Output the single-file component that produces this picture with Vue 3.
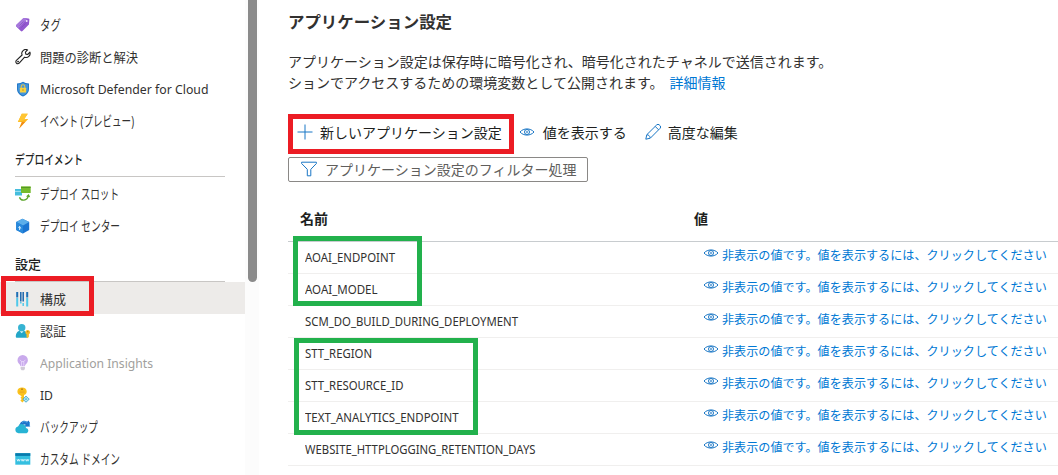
<script setup>
const vFit = {
  mounted(el, { value }) {
    const natural = el.getBoundingClientRect().width
    if (natural > 0) el.style.transform = `scaleX(${value / natural})`
  }
}

const groups = [
  {
    title: '', width: 0,
    items: [
      { icon: 'tag', label: 'タグ', w: 21, kana: true },
      { icon: 'wrench', label: '問題の診断と解決', w: 98 },
      { icon: 'shield', label: 'Microsoft Defender for Cloud', w: 168.5 },
      { icon: 'bolt', label: 'イベント (プレビュー)', w: 94, kana: true }
    ]
  },
  {
    title: 'デプロイメント', width: 68,
    items: [
      { icon: 'slots', label: 'デプロイ スロット', w: 79, kana: true },
      { icon: 'center', label: 'デプロイ センター', w: 80, kana: true }
    ]
  },
  {
    title: '設定', width: 26,
    items: [
      { icon: 'config', label: '構成', w: 26, active: true },
      { icon: 'auth', label: '認証', w: 26 },
      { icon: 'bulb', label: 'Application Insights', w: 113, disabled: true },
      { icon: 'key', label: 'ID', w: 13 },
      { icon: 'backup', label: 'バックアップ', w: 58, kana: true },
      { icon: 'domain', label: 'カスタム ドメイン', w: 80, kana: true }
    ]
  }
]

const settings = [
  { name: 'AOAI_ENDPOINT', w: 90 },
  { name: 'AOAI_MODEL', w: 72.5 },
  { name: 'SCM_DO_BUILD_DURING_DEPLOYMENT', w: 213 },
  { name: 'STT_REGION', w: 67 },
  { name: 'STT_RESOURCE_ID', w: 98.5 },
  { name: 'TEXT_ANALYTICS_ENDPOINT', w: 153.5 },
  { name: 'WEBSITE_HTTPLOGGING_RETENTION_DAYS', w: 230.5 }
]
</script>

<template>
  <div class="page">
    <nav class="sidebar">
      <section v-for="(g, i) in groups" :key="i" class="group">
        <h3 v-if="g.title"><span v-fit="g.width" class="fit">{{ g.title }}</span></h3>
        <div v-for="it in g.items" :key="it.label" class="item" :class="{ active: it.active, disabled: it.disabled, kana: it.kana }">
          <svg class="icon" viewBox="0 0 16 16">
            <g v-if="it.icon === 'tag'">
              <path d="M1.2 8 8 1.4q.6-.5 1.4-.4l4 .5q1 .2 1 1.100l-.4 4.300q0 .7-.6 1.200L7.500 14q-.9.8-1.700 0L1.300 9.500q-.7-.8-.1-1.500z" fill="#9258cf" />
              <path d="M1.2 8 8 1.400q.6-.5 1.400-.4l3 .4L3.500 11.500 1.300 9.500q-.7-.8-.1-1.500z" fill="#a678dc" />
              <path d="m4.500 8.500 4-4M6.500 10.500l4-4" stroke="#7f47bb" stroke-width=".6" />
              <circle cx="11.700" cy="3.900" r="1" fill="#efe4fa" />
            </g>
            <g v-else-if="it.icon === 'wrench'" fill="#fff" stroke="#222" stroke-width="1.100" stroke-linejoin="round">
              <path d="M14.900 3.200a4 4 0 0 1-5.300 5L4.200 14.200a1.900 1.900 0 0 1-2.800-.1 1.900 1.900 0 0 1 0-2.700L7.100 6A4 4 0 0 1 12.600.9L10.400 3.200l.4 1.900 1.900.4z" />
              <circle cx="3.100" cy="12.600" r=".4" />
            </g>
            <g v-else-if="it.icon === 'shield'">
              <path d="M8 .8q2.400 1.700 6 1.700v5.200c0 4-2.500 6.200-6 7.800-3.500-1.600-6-3.800-6-7.800V2.500q3.600 0 6-1.700z" fill="#2178c8" />
              <path d="M8 1.800q2.200 1.500 5.100 1.600v4.300c0 3.500-2.100 5.200-5.100 6.700-3-1.500-5.100-3.200-5.100-6.700V3.400Q5.800 3.300 8 1.800z" fill="#4496dc" />
              <path d="M6.200 7V5.500a1.800 1.800 0 0 1 3.600 0V7" fill="none" stroke="#e3c348" stroke-width="1.100" />
              <rect x="4.900" y="6.700" width="6.200" height="4.700" rx=".5" fill="#f7d241" />
              <path d="M8 8.300v1.500" stroke="#b88b16" stroke-width="1" />
            </g>
            <g v-else-if="it.icon === 'bolt'">
              <path d="M6.800.8h6L9.300 6h3.900L4.200 15.500 6.700 9H2.800z" fill="#fcb51d" />
              <path d="M6.800.8h6L9.300 6H13L3 9z" fill="#ffc532" />
              <path d="m7 9-2.800 6.500L10 9z" fill="#f18a18" />
            </g>
            <g v-else-if="it.icon === 'slots'">
              <path d="M0 3h7v6.500H0z" fill="#45bddd" /><path d="M0 5.400h7" stroke="#a5e2f2" />
              <path d="M6 .3h9.700v6.700H6z" fill="#76bb2e" /><path d="M6 1.500h9.700" stroke="#4d9221" stroke-width=".8" />
              <path d="M4.500 11.200c1.300 4.200 7.700 4 9-1.500" fill="none" stroke="#5ba52a" stroke-width="1.300" />
              <path d="m11 10.600 2.700-2.600 1.500 3.300z" fill="#5ba52a" />
            </g>
            <g v-else-if="it.icon === 'center'">
              <path d="m7.500.7 6.700 3.300v8L8 15.500 1.200 12V4z" fill="#1b75d1" />
              <path d="m1.200 4 6.300-3.300L14.200 4 8 7.500z" fill="#5baeea" />
              <path d="M1.200 4 8 7.500v8L1.200 12z" fill="#2889dc" />
              <path d="M4.600 12V8.800M3.400 9.600l1.200-1.300L5.800 10.600" stroke="#d8efff" fill="none" />
            </g>
            <g v-else-if="it.icon === 'config'">
              <path d="M2.200 1v5.500M12.200 1v5.500" stroke="#1f6fb5" stroke-width="2" />
              <path d="M2.200 7v8.500M12.200 7v8.500" stroke="#50c9ea" stroke-width="2" />
              <path d="M5.800 1v9.500M8.200 1v9.500" stroke="#1b65ac" stroke-width="1.500" />
              <path d="M5.800 11v1.500M8.200 12v3" stroke="#50c9ea" stroke-width="1.500" />
            </g>
            <g v-else-if="it.icon === 'auth'">
              <path d="M.8 13.800C.8 9.500 3 7.500 6.700 7.500s5.900 2 5.900 6.300q0 .9-.9.900h-10q-.9 0-.9-.9z" fill="#23a6c7" />
              <circle cx="6.700" cy="4.700" r="3.700" fill="#36b3d2" />
              <path d="m4.700 8.200 2 2 2-2" fill="#d5f4fa" />
              <path d="M12.800 7a2.300 2.300 0 0 1 1.100 4.300v2.500l-1.200 1.500-1.200-1.200v-2.800A2.300 2.300 0 0 1 12.800 7z" fill="#f9bd28" />
              <circle cx="12.800" cy="8.700" r=".6" fill="#a96a12" />
            </g>
            <g v-else-if="it.icon === 'bulb'">
              <path d="M5.500 11.300c0-2-3-3.200-3-6.100a5.200 5.200 0 0 1 10.400 0c0 2.900-3 4.100-3 6.100z" fill="#c9aaec" />
              <path d="M6.600 11.200V6.600L5 4.800M8.800 11.200V6.600l1.600-1.800M6.500 6.600h2.400" fill="none" stroke="#f1e5ff" stroke-width=".7" />
              <path d="M5.600 12h4.300v2l-1 1.300H6.600l-1-1.300z" fill="#cfcad6" />
            </g>
            <g v-else-if="it.icon === 'key'">
              <path d="M7 .5c2.800 0 4.700 1.500 4.700 3.900 0 1.700-1 3-2.700 3.700v5.700l-1.600 1.600-2-2 1.300-1.300-1.300-1.300 1.300-1.200L5 8C3.300 7.300 2.400 6 2.400 4.400 2.400 2 4.200.5 7 .5z" fill="#fbc21c" />
              <path d="M4.500 4.200h5M4.500 5.500h5" stroke="#e9a620" stroke-width=".7" /><circle cx="7" cy="2.200" r=".9" fill="#b57c1c" />
              <path d="m11 9 3.300 3.200L11 15.300l-3.200-3.100z" fill="#68c6e3" stroke="#3098bd" stroke-width=".6" />
              <path d="m11 10.200 2 2-2 1.800-1.800-1.800z" fill="none" stroke="#e0f7fc" stroke-width=".7" />
            </g>
            <g v-else-if="it.icon === 'backup'">
              <path d="M4.100 7.600C4.700 2.800 8.600.3 12 2.700l1.900-1.300 1.300 6.200-6 .2 1.500-2C8.600 5 7.200 5.600 6.700 7.700z" fill="#1c72c9" />
              <path d="M7 3.500c2-1.500 3.800-1.100 5.400.3M14.500 3v4" stroke="#4aa4e6" fill="none" />
              <path d="M3.500 14.200A3.400 3.400 0 0 1 3 7.500a4.200 4.200 0 0 1 8 1.500 2.700 2.700 0 0 1 .6 5.200z" fill="#27b3d4" />
            </g>
            <g v-else>
              <path d="M.3 2.200h15v11.500H.3z" fill="#35bfe0" /><path d="M.3 2.200h15v2.700H.3z" fill="#087aac" />
              <path d="m2 8.200.8 2 .8-2 .8 2 .8-2m1.100 0 .8 2 .8-2 .8 2 .8-2m1.100 0 .8 2 .8-2 .8 2 .8-2" fill="none" stroke="#e7faff" stroke-width=".8" />
            </g>
          </svg>
          <span v-fit="it.w" class="fit">{{ it.label }}</span>
        </div>
      </section>
      <div class="callout red nav-mark"></div>
    </nav>

    <div class="gutter"><div class="thumb"></div></div>

    <main>
      <h2><span v-fit="164" class="fit">アプリケーション設定</span></h2>
      <p class="intro">アプリケーション設定は保存時に暗号化され、暗号化されたチャネルで送信されます。<br>ションでアクセスするための環境変数として公開されます。<a>詳細情報</a></p>

      <div class="toolbar">
        <button class="add">
          <svg viewBox="0 0 16 16"><path d="M8 .5v15M.5 8h15" /></svg>
          <span>新しいアプリケーション設定</span>
        </button>
        <button class="show">
          <svg viewBox="0 0 16 16"><path d="M1 8C4.500 3.900 11.500 3.900 15 8 11.500 12.100 4.500 12.100 1 8z" /><circle cx="8" cy="8" r="2.500" /><circle cx="8" cy="8" r=".5" /></svg>
          <span>値を表示する</span>
        </button>
        <button class="edit">
          <svg viewBox="0 0 16 16"><path d="m.8 15.200 1-4.500L11.600 1a1.900 1.900 0 0 1 2.800 0l.6.6a1.900 1.900 0 0 1 0 2.800l-9.700 9.800zM10.200 2.400l3.400 3.400M1.900 10.700c1.800.2 3 1.300 3.300 3.200" /></svg>
          <span>高度な編集</span>
        </button>
      </div>

      <div class="filter">
        <svg viewBox="0 0 16 16"><path d="M.6 1.200h14.800v1.300L9.800 8.300v6.500H6.300V8.300L.6 2.500z" /></svg>
        <span>アプリケーション設定のフィルター処理</span>
      </div>

      <div class="table">
        <div class="head"><span>名前</span><span>値</span></div>
        <div v-for="s in settings" :key="s.name" class="row">
          <span class="name"><span v-fit="s.w" class="fit">{{ s.name }}</span></span>
          <a class="value">
            <svg viewBox="0 0 16 16"><path d="M1 8C4.500 3.900 11.500 3.900 15 8 11.500 12.100 4.500 12.100 1 8z" /><circle cx="8" cy="8" r="2.500" /><circle cx="8" cy="8" r=".5" /></svg>
            <span v-fit="324.8" class="fit">非表示の値です。値を表示するには、クリックしてください</span>
          </a>
        </div>
      </div>
      <div class="callout red add-mark"></div>
      <div class="callout green aoai-mark"></div>
      <div class="callout green stt-mark"></div>
    </main>
  </div>
</template>

<style>
body { margin: 0; background: #fff; overflow: hidden; }
</style>

<style scoped>
.page { position: relative; display: flex; width: 1058px; height: 475px; overflow: hidden; background: #fff; color: #323130; font: 14px/20px "Noto Sans CJK JP", sans-serif; }
.fit { display: inline-block; white-space: pre; transform-origin: left center; }
.sidebar { flex: none; width: 245px; padding-top: 8px; box-sizing: border-box; font: 13px/20px "Noto Sans", "Noto Sans CJK JP", sans-serif; }
.item { display: flex; align-items: center; height: 32px; box-sizing: border-box; padding: 1px 0 0 15px; gap: 9px; white-space: nowrap; }
.group:nth-child(2) .item { padding: 0 0 1px 15px; }
.kana { font-size: 14px; }
.icon { flex: none; width: 16px; height: 16px; }
.active { background: #edebe9; }
.disabled { color: #a19f9d; }
h3 { box-sizing: border-box; height: 41px; margin: 0 20px 1px 15px; padding-top: 13px; border-bottom: 1px solid #c8c6c4; color: #201f1e; font-size: 13px; line-height: 20px; font-weight: 500; white-space: nowrap; }
.group:nth-child(3) h3 { height: 40px; margin-bottom: 0; padding-top: 12px; }
.gutter { flex: none; width: 14px; background: #fcfcfc; }
.thumb { width: 9px; height: 282px; margin-left: 3px; background: #8b8b8b; border-radius: 0 0 5px 5px; }
main { flex: 1; min-width: 0; padding-left: 29px; }
h2 { height: 24px; margin: 9px 0 18px; font-size: 16px; line-height: 24px; font-weight: 700; }
.intro { margin: 0; height: 42px; line-height: 21px; white-space: nowrap; }
.intro a { margin-left: 6px; color: #0078d4; }
.toolbar { display: flex; align-items: center; height: 40px; margin-top: 20px; }
button { display: flex; align-items: center; height: 22px; box-sizing: border-box; padding: 0 0 2px; border: 0; background: none; color: #201f1e; font: inherit; white-space: nowrap; }
button svg, .filter svg, .value svg { flex: none; width: 16px; height: 16px; fill: none; stroke: #1976c5; stroke-width: 1; }
.add { padding-left: 9px; gap: 7px; }
.show { margin-left: 17px; gap: 8px; }
.edit { margin-left: 18px; gap: 7px; }
.filter { display: flex; align-items: center; width: 300px; height: 25px; box-sizing: border-box; margin-top: 4px; padding: 0 0 1px 12px; gap: 8px; border: 1px solid #8a8886; border-radius: 2px; color: #605e5c; white-space: nowrap; }
.table { margin-top: 19px; }
.head { display: grid; grid-template-columns: 394px 1fr; box-sizing: border-box; height: 41px; padding: 7px 0 0 12px; border-bottom: 1px solid #c8cccf; color: #201f1e; font-weight: 700; }
.row { display: grid; grid-template-columns: 398px 1fr; box-sizing: border-box; height: 32px; padding-left: 17px; border-bottom: 1px solid #f0efee; white-space: nowrap; }
.name { font: 12px/31px "Noto Sans", sans-serif; }
.value { display: flex; align-items: flex-start; padding-top: 3px; gap: 3px; color: #0078d4; font-size: 12px; }
.callout { position: absolute; box-sizing: border-box; border: 5px solid; }
.red { border-color: #ec1c24; }
.green { border-color: #22b14c; }
.nav-mark { left: 1px; top: 276px; width: 93px; height: 40px; }
.add-mark { left: 288px; top: 114px; width: 226px; height: 40px; }
.aoai-mark { left: 293px; top: 236px; width: 129px; height: 70px; }
.stt-mark { left: 294px; top: 338px; width: 184px; height: 97px; }
</style>
